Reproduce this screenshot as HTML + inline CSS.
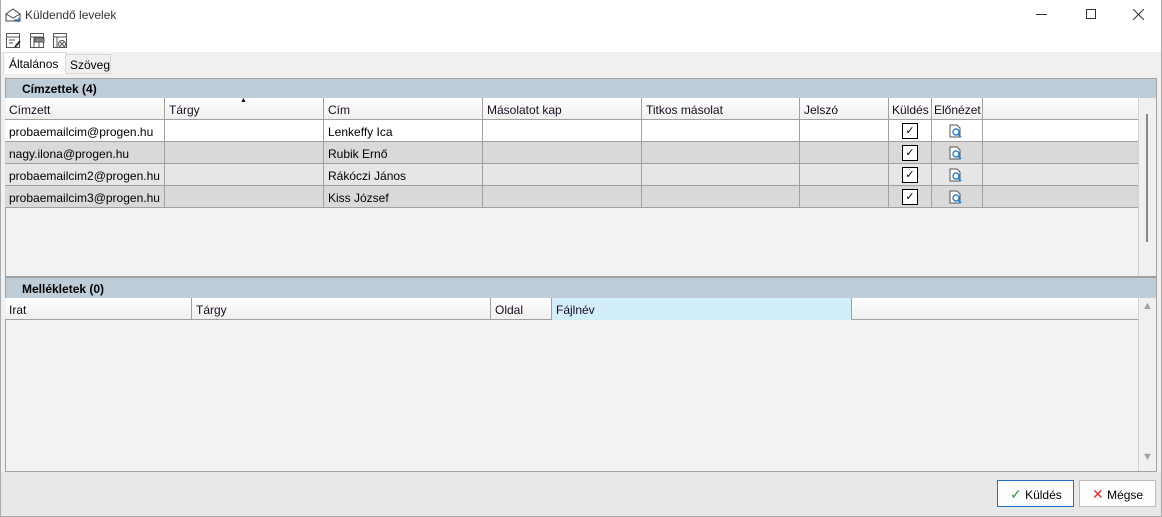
<!DOCTYPE html>
<html><head><meta charset="utf-8"><style>
*{box-sizing:border-box;margin:0;padding:0}
body{width:1162px;height:517px;overflow:hidden;background:#f0f0f0;font-family:"Liberation Sans",sans-serif;font-size:12px;color:#000;position:relative}
.a{position:absolute}
.hc{position:absolute;top:0;height:22px;border-right:1px solid #a0a0a0;padding:5px 0 0 4px;white-space:nowrap;color:#1a0a20}
.cell{position:absolute;top:0;height:22px;border-right:1px solid #a0a0a0;padding:5px 0 0 4px;white-space:nowrap}
.row{position:absolute;left:5px;width:1133px;height:22px;border-bottom:1px solid #a0a0a0}
.chk{position:absolute;left:13px;top:3px;width:16px;height:16px;border:1px solid #000;background:#fff;font-size:11px;text-align:center;line-height:14px}
</style></head><body>
<div class="a" style="left:0;top:0;width:1162px;height:52px;background:#fff"></div>
<svg class="a" style="left:5px;top:7px" width="16" height="16" viewBox="0 0 16 16"><path d="M1 7 L8 2 L15 7 V14 H1 Z M1 7 L8 11 L15 7" fill="none" stroke="#444" stroke-width="1"/><path d="M9 13 H15 M13 11 L15 13 L13 15" stroke="#2a6ebb" fill="none"/></svg>
<div class="a" style="left:25px;top:8px;color:#333;font-size:12px">Küldendő levelek</div>
<div class="a" style="left:1036px;top:14px;width:11px;height:1px;background:#333"></div>
<div class="a" style="left:1086px;top:9px;width:10px;height:10px;border:1px solid #333"></div>
<svg class="a" style="left:1133px;top:9px" width="11" height="11"><path d="M0 0 L11 11 M11 0 L0 11" stroke="#333"/></svg>
<svg class="a" style="left:6px;top:33px" width="62" height="16" viewBox="0 0 62 16"><g fill="none" stroke="#555"><rect x="0.5" y="0.5" width="13" height="14"/><path d="M0.5 4 H13.5 M3 7 H9 M3 10 H7"/><path d="M9 14 L14 8" stroke="#333" stroke-width="2"/>
<rect x="24.5" y="0.5" width="13" height="14"/><path d="M24.5 4 H37.5 M28 4 V15 M33 4 V15"/><rect x="29" y="5" width="9" height="4" fill="#888"/>
<rect x="47.5" y="0.5" width="13" height="14"/><path d="M47.5 4 H60.5 M51 4 V15"/><circle cx="56" cy="11" r="3.5" fill="#fff"/><path d="M54 9 L58 13 M58 9 L54 13"/></g></svg>
<div class="a" style="left:3px;top:52px;width:63px;height:22px;background:#fff;border:1px solid #d8d8d8;border-bottom:none;padding:4px 0 0 5px">Általános</div>
<div class="a" style="left:65px;top:54px;width:46px;height:20px;background:#f0f0f0;border:1px solid #d8d8d8;padding:3px 0 0 4px">Szöveg</div>
<div class="a" style="left:5px;top:78px;width:1152px;height:394px;border:1px solid #a0a0a0;background:#f2f2f2"></div>
<div class="a" style="left:6px;top:79px;width:1150px;height:19px;background:#bfcdd9;padding:3px 0 0 16px;font-weight:bold">Címzettek (4)</div>
<div class="row" style="top:98px;background:linear-gradient(#fff,#f0f0f0);">
<div class="hc" style="left:0;width:160px">Címzett</div>
<div class="hc" style="left:160px;width:159px">Tárgy<span class="a" style="left:75px;top:-1px;font-size:7px">▲</span></div>
<div class="hc" style="left:319px;width:159px">Cím</div>
<div class="hc" style="left:478px;width:159px">Másolatot kap</div>
<div class="hc" style="left:637px;width:158px">Titkos másolat</div>
<div class="hc" style="left:795px;width:89px">Jelszó</div>
<div class="hc" style="left:884px;width:43px;padding-left:3px">Küldés</div>
<div class="hc" style="left:927px;width:51px;padding-left:2px">Előnézet</div>
</div>
<div id="rows"></div>
<div class="a" style="left:1138px;top:98px;width:18px;height:178px;background:#f0f0f0;border-left:1px solid #d0d0d0"></div>
<div class="a" style="left:1146px;top:114px;width:2px;height:128px;background:#888"></div>
<div class="a" style="left:6px;top:276px;width:1150px;height:2px;background:#a0a0a0"></div>
<div class="a" style="left:6px;top:278px;width:1150px;height:20px;background:#bfcdd9;padding:4px 0 0 16px;font-weight:bold">Mellékletek (0)</div>
<div class="row" style="top:298px;width:1133px;background:linear-gradient(#fff,#f0f0f0)">
<div class="hc" style="left:0;width:187px">Irat</div>
<div class="hc" style="left:187px;width:299px">Tárgy</div>
<div class="hc" style="left:486px;width:61px">Oldal</div>
<div class="hc" style="left:547px;width:300px;background:#d2eefb">Fájlnév</div>
</div>
<div class="a" style="left:1138px;top:298px;width:18px;height:173px;background:#f0f0f0;border-left:1px solid #d0d0d0;color:#a0a0a0;font-size:11px;text-align:center"><div style="margin-top:2px">▲</div><div style="margin-top:139px">▼</div></div>
<div class="a" style="left:0;top:472px;width:1162px;height:45px;background:#e8e8e8"></div>
<div class="a" style="left:997px;top:480px;width:77px;height:27px;background:#fdfdfd;border:1px solid #1e6fc0;padding:5px 0 0 12px"><span style="color:#2a9a40;font-size:14px">✓</span> Küldés</div>
<div class="a" style="left:1079px;top:480px;width:77px;height:27px;background:#fdfdfd;border:1px solid #bbb;padding:5px 0 0 12px"><span style="color:#e03030;font-size:14px">✕</span> Mégse</div>
<div class="a" style="left:0;top:0;width:1162px;height:517px;border:1px solid #aaa;border-top:none"></div>
<script>
var d=[["probaemailcim@progen.hu","Lenkeffy Ica","#fff"],["nagy.ilona@progen.hu","Rubik Ernő","#d9d9d9"],["probaemailcim2@progen.hu","Rákóczi János","#e6e6e6"],["probaemailcim3@progen.hu","Kiss József","#d9d9d9"]];
var w=[[0,160],[160,159],[319,159],[478,159],[637,158],[795,89],[884,43],[927,51]],h="";
d.forEach(function(r,i){h+='<div class="row" style="top:'+(120+i*22)+'px;background:'+r[2]+'">';
w.forEach(function(c,j){var t=j==0?r[0]:j==2?r[1]:"";if(j==6)t='<div class="chk">✓</div>';
if(j==7)t='<svg style="position:absolute;left:17px;top:4px" width="14" height="14"><path d="M1 1H8L11 4V13H1Z" fill="#fff" stroke="#555"/><circle cx="7" cy="8" r="3" fill="none" stroke="#2a7fd0" stroke-width="1.4"/><path d="M9 10L12 13" stroke="#2a7fd0" stroke-width="1.6"/></svg>';
h+='<div class="cell" style="left:'+c[0]+'px;width:'+c[1]+'px">'+t+'</div>'});h+='</div>'});
document.getElementById("rows").innerHTML=h;
</script>
</body></html>
